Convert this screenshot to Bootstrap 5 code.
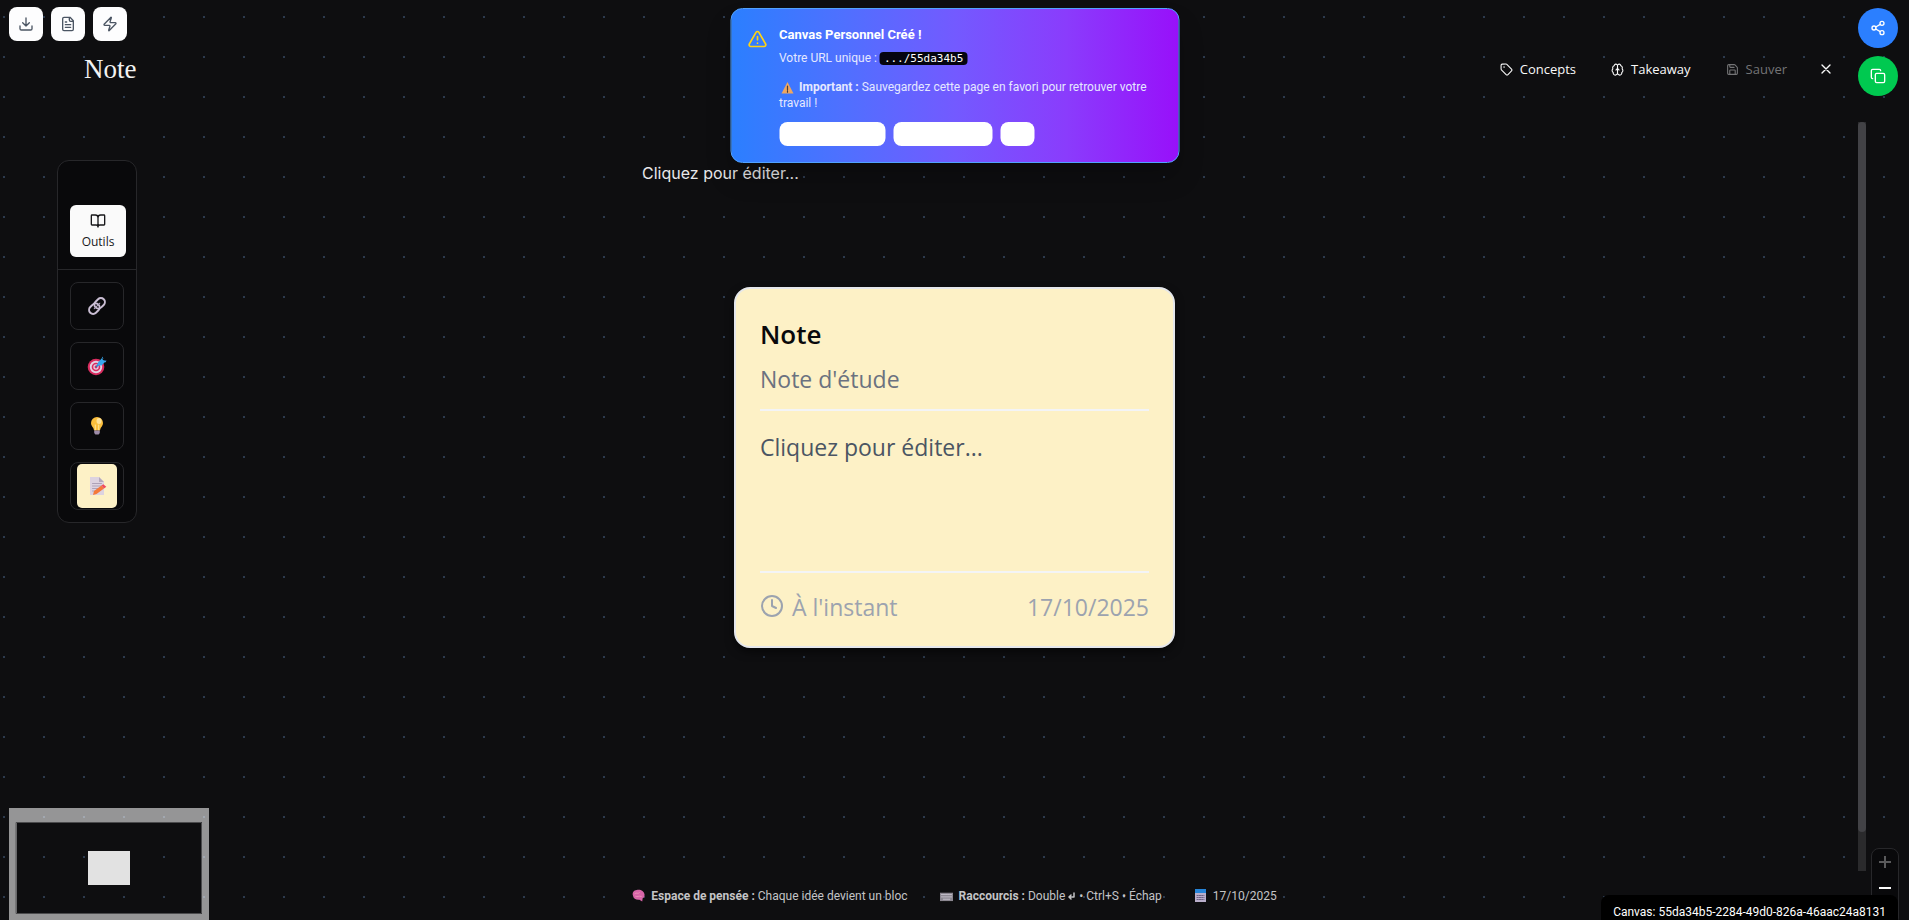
<!DOCTYPE html>
<html lang="fr" data-bs-theme="dark">
<head>
<meta charset="utf-8">
<meta name="viewport" content="width=device-width, initial-scale=1">
<title>Note</title>
<link rel="stylesheet" href="https://cdn.jsdelivr.net/npm/bootstrap@5.3.0/dist/css/bootstrap.min.css">
<style>
  body { font-family: Roboto, "Noto Sans", sans-serif; font-size: 12px; line-height: 16px; color: #fafafa; background: #0e0e10; }
  svg { flex: none; fill: none; stroke: currentColor; stroke-width: 2; stroke-linecap: round; stroke-linejoin: round; }
  svg.emoji { stroke: none; }
  .workspace { background: radial-gradient(circle at 4px 17px, #2c3a4e 1px, transparent 1px) 0 0 / 40px 40px; }
  .topbar { height: 122px; padding: 16px 63px 0 84px; }
  .page-title { font: 27px/32px "Liberation Serif", serif; color: #f2f2f2; }
  .actions { gap: 11px; }
  .action { font-family: "Open Sans", sans-serif; font-size: 13px; font-weight: 500; line-height: 20px; padding: 6px 12px; color: #fafafa; border: 0; gap: 7px; }
  .action:disabled { color: #747476; border: 0; opacity: 1; }
  .action-close { padding-left: 8px; }
  .board { display: grid; grid-template-columns: 1fr minmax(0, 625px) 1fr; }
  .palette { width: 80px; margin: 38px 0 0 57px; border: 1px solid #27272a; border-radius: 12px; background: #09090b; }
  .palette-head { padding: 44px 10px 12px 12px; border-bottom: 1px solid #27272a; }
  .tools-btn { height: 52px; font: 500 12px/16px "Open Sans", sans-serif; gap: 5px; color: #18181b; background: #fafafa; border: 0; border-radius: 6px; }
  .palette-list { padding: 12px; gap: 12px; }
  .tool { width: 54px; height: 48px; padding: 0; border: 1px solid #27272a; border-radius: 8px; background: #09090b; }
  .tool-note { width: 40px; height: 44px; border-radius: 5px; background: #fdf1c6; }
  .prompt-line { font: 400 16px/24px Inter, sans-serif; color: #e8e8ea; padding-top: 39px; }
  .note-card { width: 441px; height: 361px; margin-top: 102px; padding: 24px 24px 23px; border: 2px solid #e5e7eb; border-radius: 16px; background: #fdf1c6; font-family: "Open Sans", sans-serif; font-size: 23px; line-height: 32px; color: #4b5563; box-shadow: 0 4px 8px #0008; }
  .note-head { height: 98px; border-bottom: 2px solid #f3f4f6; }
  .note-head h2 { font-size: 26px; line-height: 36px; font-weight: 600; color: #09090b; margin: 3px 0 12px; }
  .note-head p { color: #6b7280; line-height: 30px; }
  .note-body { padding-top: 20px; }
  .note-foot { border-top: 2px solid #f3f4f6; padding-top: 18px; color: #9ca3af; }
  .track { width: 8px; margin-right: 43px; background: #2a2a2c; }
  .thumb { height: 710px; max-height: 95%; border-radius: 4px; background: #424246; }
  .statusbar { height: 49px; gap: 32px; color: #c4c4c6; }
  .statusbar svg { margin-right: 2px; }
  .quick { top: 7px; left: 9px; gap: 8px; }
  .quick .btn { width: 34px; height: 34px; padding: 0; border: 0; border-radius: 8px; background: #fdfdfe; color: #4b5563; }
  .notice { top: 8px; width: 449px; padding: 16px; gap: 12px; border: 1px solid #51a2ff; border-radius: 12px; background: linear-gradient(to right, #2b7fff, #4f70ff 25%, #735aff 50%, #8a3cfc 75%, #9810fa); box-shadow: 0 16px 24px #0003; }
  .notice h3 { font-size: 13px; line-height: 20px; font-weight: 700; margin: 0 0 5px; color: #fff; }
  .notice code { font-family: "DejaVu Sans Mono", monospace; font-size: 11px; color: #fff; background: #050510; border-radius: 4px; padding: 0 4px; }
  .notice p { color: #e5e8ff; }
  .notice .important { margin-top: 12px; }
  .notice-buttons { margin-top: 11px; }
  .notice .btn { height: 24px; padding: 0; border: 0; border-radius: 8px; background: #fff; }
  .b-long { width: 106px; } .b-mid { width: 99px; } .b-short { width: 34px; }
  .share { top: 8px; right: 11px; gap: 8px; }
  .share .btn { width: 40px; height: 40px; padding: 0; border: 0; color: #fff; }
  .s-link { background: #2b7fff; } .s-copy { background: #00c950; }
  .minimap { left: 9px; bottom: 0; width: 200px; height: 112px; stroke: none; }
  .zoomer { right: 10px; bottom: -6px; width: 28px; height: 78px; border: 1px solid #27272a; border-radius: 8px; background: #09090b; }
  .zoomer .btn { height: 26px; padding: 0; border: 0; color: #fafafa; }
  .zoomer .btn:disabled { color: #5a5a5c; border: 0; opacity: 1; }
  .canvas-id { right: 11px; bottom: -8px; padding: 9px 12px 8px; border-radius: 8px; background: #000; color: #fff; }
</style>
<script src="https://cdn.jsdelivr.net/npm/bootstrap@5.3.0/dist/js/bootstrap.bundle.min.js"></script>
</head>
<body>
<div class="workspace position-relative vh-100 overflow-hidden d-flex flex-column">

  <header class="topbar d-flex align-items-center justify-content-between">
    <h1 class="page-title m-0">Note</h1>
    <div class="actions d-flex align-items-center">
      <button class="btn action d-flex align-items-center" type="button">
        <svg width="13" height="13" viewBox="0 0 24 24"><path d="M12.6 2.6A2 2 0 0 0 11.2 2H4a2 2 0 0 0-2 2v7.200a2 2 0 0 0 .6 1.400l8.700 8.700a2.400 2.400 0 0 0 3.400 0l6.600-6.600a2.400 2.400 0 0 0 0-3.400z"/><circle cx="7.500" cy="7.500" r=".5"/></svg>Concepts</button>
      <button class="btn action d-flex align-items-center" type="button">
        <svg width="13" height="13" viewBox="0 0 24 24"><path d="M12 5a3 3 0 1 0-6 .1 4 4 0 0 0-2.500 5.800 4 4 0 0 0 .6 6.600A4 4 0 1 0 12 18z"/><path d="M12 5a3 3 0 1 1 6 .1 4 4 0 0 1 2.500 5.800 4 4 0 0 1-.6 6.600A4 4 0 1 1 12 18z"/><path d="M15 13a4.500 4.500 0 0 1-3-4 4.500 4.500 0 0 1-3 4"/></svg>Takeaway</button>
      <button class="btn action d-flex align-items-center" type="button" disabled>
        <svg width="13" height="13" viewBox="0 0 24 24"><path d="M15.200 3a2 2 0 0 1 1.400.6l3.800 3.800a2 2 0 0 1 .6 1.400V19a2 2 0 0 1-2 2H5a2 2 0 0 1-2-2V5a2 2 0 0 1 2-2z"/><path d="M17 21v-7a1 1 0 0 0-1-1H8a1 1 0 0 0-1 1v7M7 3v4a1 1 0 0 0 1 1h7"/></svg>Sauver</button>
      <button class="btn action action-close d-flex align-items-center" type="button" aria-label="Fermer">
        <svg width="16" height="16" viewBox="0 0 24 24"><path d="M18 6 6 18M6 6l12 12"/></svg></button>
    </div>
  </header>

  <main class="board flex-grow-1">
    <aside>
      <div class="palette">
        <div class="palette-head">
          <button class="btn tools-btn w-100 p-0 d-flex flex-column align-items-center justify-content-center" type="button">
            <svg width="16" height="16" viewBox="0 0 24 24"><path d="M12 7v14M3 18a1 1 0 0 1-1-1V4a1 1 0 0 1 1-1h5a4 4 0 0 1 4 4 4 4 0 0 1 4-4h5a1 1 0 0 1 1 1v13a1 1 0 0 1-1 1h-6a3 3 0 0 0-3 3 3 3 0 0 0-3-3z"/></svg>Outils</button>
        </div>
        <div class="palette-list d-flex flex-column">
          <button class="btn tool d-flex align-items-center justify-content-center" type="button" aria-label="Lien">
            <svg class="emoji" width="20" height="20" viewBox="0 0 20 20"><g transform="rotate(-45 10 10)" fill="none" stroke="#c9bdd3" stroke-width="2"><rect x="0.500" y="6" width="11.500" height="8" rx="4"/><rect x="8" y="6" width="11.500" height="8" rx="4"/><path d="M6 10h8" stroke="#b4a6c0" stroke-width="1"/></g></svg></button>
          <button class="btn tool d-flex align-items-center justify-content-center" type="button" aria-label="Objectif">
            <svg class="emoji" width="20" height="20" viewBox="0 0 20 20"><circle cx="9" cy="11" r="8.300" fill="#d92c5f"/><circle cx="9" cy="11" r="6.200" fill="#e3d3e3"/><circle cx="9" cy="11" r="4.300" fill="#d92c5f"/><circle cx="9" cy="11" r="2.700" fill="#e3d3e3"/><circle cx="9" cy="11" r="1.400" fill="#d92c5f"/><path d="m9.500 10.500 5-5" stroke="#2378c4" stroke-width="1.500"/><path d="m11 6.500 4-4.500 1 2 3 1-4.500 4.500H10z" fill="#38a8ee"/><path d="m15 2 .5-1.500 1 2.500zM17 5l2.500-.5-1 2z" fill="#38a8ee"/></svg></button>
          <button class="btn tool d-flex align-items-center justify-content-center" type="button" aria-label="Idée">
            <svg class="emoji" width="20" height="20" viewBox="0 0 20 20"><path d="M10 1a6 6 0 0 0-6 6c0 2.400 1.300 3.600 2.300 5l.8 2.500h5.800l.8-2.500c1-1.400 2.300-2.600 2.300-5a6 6 0 0 0-6-6z" fill="#fcbf3c"/><ellipse cx="12" cy="5" rx="2.500" ry="3" fill="#ffe39a"/><path d="M8.300 9v5M11.700 9v5" stroke="#fff0b0" stroke-width=".8"/><path d="M7.200 14.500h5.600v2.500l-1.200 1.500H8.400L7.200 17z" fill="#9d8ba8"/></svg></button>
          <button class="btn tool d-flex align-items-center justify-content-center" type="button" aria-label="Note">
            <span class="tool-note d-flex align-items-center justify-content-center"><svg class="emoji" width="20" height="20" viewBox="0 0 20 20"><path d="M3 1h9l5 5v13H3z" fill="#ddd3e0"/><path d="m12 1 5 5h-5z" fill="#b5a9bd"/><path d="M5.500 7.500h9M5.500 10h9M5.500 12.500h6M5.500 15h4" stroke="#aea2b8" stroke-width="1"/><path d="m7 15 7.500-5.500 2.500 3L9.500 18 6 19z" fill="#f5793a"/><path d="m14.500 9.500 1.800-1.300 3 2.500-2.300 1.800z" fill="#f04a5e"/></svg></span></button>
        </div>
      </div>
    </aside>
    <section>
      <div class="prompt-line">Cliquez pour éditer...</div>
      <article class="note-card mx-auto d-flex flex-column">
        <div class="note-head">
          <h2>Note</h2>
          <p class="m-0">Note d'étude</p>
        </div>
        <p class="note-body flex-grow-1 m-0">Cliquez pour éditer...</p>
        <div class="note-foot d-flex justify-content-between">
          <span class="d-flex align-items-start gap-2"><svg class="mt-1" width="24" height="24" viewBox="0 0 24 24"><circle cx="12" cy="11" r="10"/><path d="M12 5v6l4 2"/></svg>À l'instant</span>
          <time datetime="2025-10-17">17/10/2025</time>
        </div>
      </article>
    </section>
    <div class="d-flex justify-content-end"><div class="track"><div class="thumb"></div></div></div>
  </main>

  <footer class="statusbar d-flex align-items-center justify-content-center">
    <span class="d-flex align-items-center gap-1"><svg class="emoji" width="13" height="13" viewBox="0 0 14 14"><path d="M1 7C0 4 2 1 5 1c4-1 8 1 8.500 5 .2 3-1 3.500-2 4l-.5 3.500-3-2C5 12 1.500 11 1 7z" fill="#d765a8"/><path d="M3 5c2-2 3 1 5-1M4 8c2 1 3-1 6 0" stroke="#ee91b8" stroke-width="1" fill="none"/></svg><span><b>Espace de pensée :</b> Chaque idée devient un bloc</span></span>
    <span class="d-flex align-items-center gap-1"><svg class="emoji" width="13" height="13" viewBox="0 0 14 14"><path d="M0 4h14v9H0z" fill="#8b8791"/><path d="M1.500 6h11M1.500 8.500h11M3.500 11h7" stroke="#c7c3cd" stroke-width="1" stroke-dasharray="1.500 .7"/></svg><span><b>Raccourcis :</b> Double <svg width="7" height="8" viewBox="0 0 7 8" class="me-1"><path d="M6 1v4H2M3 3 1 5l2 2" stroke-width="1.500"/></svg>• Ctrl+S • Échap</span></span>
    <span class="d-flex align-items-center gap-1"><svg class="emoji" width="13" height="15" viewBox="0 0 13 15"><path d="M1 4h11v10H1z" fill="#b9aecb"/><path d="M1 1h11v4H1z" fill="#2684d8"/><path d="M3 7.500h7M3 9.500h7M3 11.500h7" stroke="#6c6185" stroke-width="1" stroke-dasharray="1.300 1"/></svg><time datetime="2025-10-17">17/10/2025</time></span>
  </footer>

  <div class="quick position-absolute d-flex">
    <button class="btn d-flex align-items-center justify-content-center" type="button" aria-label="Télécharger"><svg width="16" height="16" viewBox="0 0 24 24"><path d="M12 15V3M21 15v4a2 2 0 0 1-2 2H5a2 2 0 0 1-2-2v-4M7 10l5 5 5-5"/></svg></button>
    <button class="btn d-flex align-items-center justify-content-center" type="button" aria-label="Document"><svg width="16" height="16" viewBox="0 0 24 24"><path d="M15 2H6a2 2 0 0 0-2 2v16a2 2 0 0 0 2 2h12a2 2 0 0 0 2-2V7zM14 2v4a2 2 0 0 0 2 2h4M10 9H8M16 13H8M16 17H8"/></svg></button>
    <button class="btn d-flex align-items-center justify-content-center" type="button" aria-label="Actions rapides"><svg width="16" height="16" viewBox="0 0 24 24"><path d="M4 14a1 1 0 0 1-.8-1.600l9.900-10.200a.5.5 0 0 1 .9.500l-1.900 6A1 1 0 0 0 13 10h7a1 1 0 0 1 .8 1.600l-9.900 10.200a.5.5 0 0 1-.9-.5l1.900-6A1 1 0 0 0 11 14z"/></svg></button>
  </div>

  <div class="notice position-absolute start-50 translate-middle-x d-flex" role="alert">
    <svg class="mt-1" width="20" height="20" viewBox="0 0 24 24" color="#fdd313"><path d="m21.700 18-8-14a2 2 0 0 0-3.500 0l-8 14A2 2 0 0 0 4 21h16a2 2 0 0 0 1.700-3M12 9v4M12 17h.01"/></svg>
    <div class="flex-grow-1">
      <h3>Canvas Personnel Créé !</h3>
      <p class="m-0">Votre URL unique : <code>.../55da34b5</code></p>
      <p class="important mb-0"><svg class="emoji me-1" width="16" height="12" viewBox="0 0 16 12"><path d="M8 0 14 11.500H2z" fill="#eea760"/><path d="M8 4v4M8 9v1.200" stroke="#493c3c" stroke-width="1.200"/></svg><b>Important :</b> Sauvegardez cette page en favori pour retrouver votre travail !</p>
      <div class="notice-buttons d-flex gap-2">
        <button class="btn b-long" type="button" aria-label="Copier l'URL"></button>
        <button class="btn b-mid" type="button" aria-label="Favori"></button>
        <button class="btn b-short" type="button" aria-label="Fermer"></button>
      </div>
    </div>
  </div>

  <div class="share position-absolute d-flex flex-column">
    <button class="btn s-link rounded-circle d-flex align-items-center justify-content-center" type="button" aria-label="Partager"><svg width="16" height="16" viewBox="0 0 24 24"><circle cx="18" cy="5" r="3"/><circle cx="6" cy="12" r="3"/><circle cx="18" cy="19" r="3"/><path d="m8.600 13.500 6.800 4M15.400 6.500l-6.800 4"/></svg></button>
    <button class="btn s-copy rounded-circle d-flex align-items-center justify-content-center" type="button" aria-label="Copier"><svg width="16" height="16" viewBox="0 0 24 24"><rect x="8" y="8" width="14" height="14" rx="2"/><path d="M4 16a2 2 0 0 1-2-2V4a2 2 0 0 1 2-2h10a2 2 0 0 1 2 2"/></svg></button>
  </div>

  <svg class="minimap position-absolute" viewBox="0 0 200 112"><path d="M0 0h200v112H0zM8 14v92h185V14z" fill="#fff" fill-opacity=".56" fill-rule="evenodd"/><path d="M7.500 14.500h185v91H7.500z" stroke="#4b4b4d" stroke-width="1"/><path d="M79 43h42v34H79z" fill="#e2e2e2"/></svg>

  <div class="zoomer position-absolute d-flex flex-column">
    <button class="btn d-flex align-items-center justify-content-center" type="button" aria-label="Zoom avant" disabled><svg width="12" height="12" viewBox="0 0 12 12"><path d="M6 0v12M0 6h12" stroke-linecap="butt"/></svg></button>
    <button class="btn d-flex align-items-center justify-content-center" type="button" aria-label="Zoom arrière"><svg width="12" height="12" viewBox="0 0 12 12"><path d="M0 6h12" stroke-linecap="butt"/></svg></button>
  </div>
  <div class="canvas-id position-absolute">Canvas: 55da34b5-2284-49d0-826a-46aac24a8131</div>
</div>
</body>
</html>
